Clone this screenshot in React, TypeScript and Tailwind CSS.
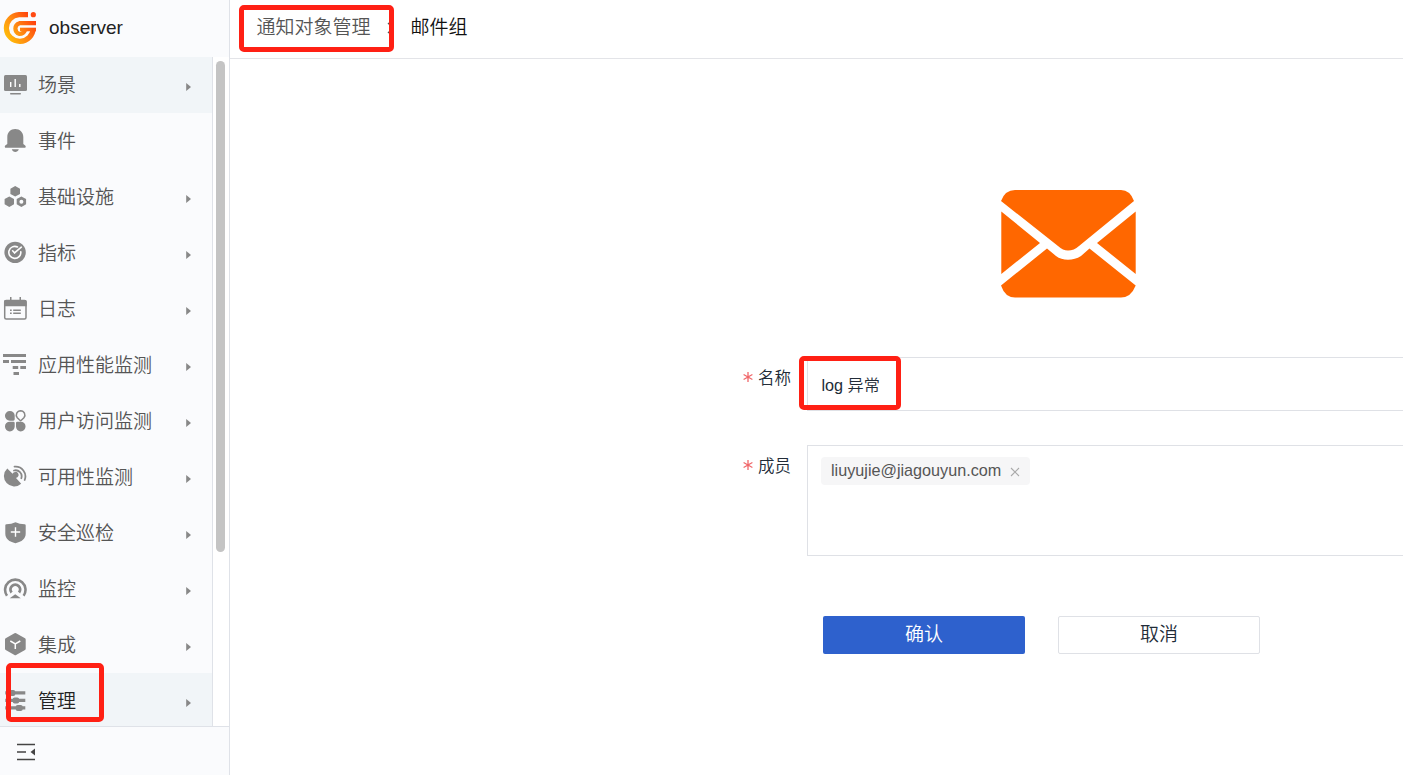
import type { ReactNode } from 'react';

const HAN = "font-['Liberation_Sans','Noto_Sans_CJK_SC',sans-serif]";

type Item = { label: string; arrow: boolean; active?: boolean; icon: ReactNode };

const items: Item[] = [
  {
    label: '场景',
    arrow: true,
    active: true,
    icon: (
      <>
        <rect x="1" y="2" width="23" height="16" rx="1.5" />
        <rect x="7" y="20" width="11" height="1.4" rx=".7" />
        <path d="M7.7 9v5M12.2 6v8M16.8 11v3" stroke="#fff" strokeWidth="1.4" />
      </>
    ),
  },
  {
    label: '事件',
    arrow: false,
    icon: (
      <path d="M12.2 0C7.6 0 4.3 3.4 4.3 8v7L2.2 16.4C1.4 17.2 1.8 18.8 3 18.8H21.4C22.8 18.8 23.2 17.2 22.2 16.4L20.3 15V8C20.3 3.4 16.8 0 12.2 0ZM8.8 20.2H15.8C15.2 22 13.8 23 12.3 23C10.7 23 9.4 22 8.8 20.2Z" />
    ),
  },
  {
    label: '基础设施',
    arrow: true,
    icon: (
      <>
        <path d="M12.2 1l4.8 2.7v5.2l-4.8 2.7-4.8-2.7V3.7zM6.3 11.5l4.7 2.6v5.2l-4.7 2.6-4.7-2.6v-5.2z" />
        <path fillRule="evenodd" d="M18.4 11.5l4.7 2.6v5.2l-4.7 2.6-4.7-2.6v-5.2zM18.4 14.7a2 2 0 1 0 0 4 2 2 0 0 0 0-4z" />
      </>
    ),
  },
  {
    label: '指标',
    arrow: true,
    icon: (
      <>
        <circle cx="12.1" cy="11.4" r="10.7" />
        <path d="M14.5 6A6 6 0 1 0 17.8 10.800M11.5 11.8L18.3 6.2" fill="none" stroke="#fff" strokeWidth="1.6" strokeLinecap="round" />
        <path d="M9.600 9.800L11.500 11.800" fill="none" stroke="#fff" strokeWidth="1.600" strokeLinecap="round" />
      </>
    ),
  },
  {
    label: '日志',
    arrow: true,
    icon: (
      <>
        <rect x="1.7" y="3.6" width="21.3" height="18.4" rx="1.5" fill="none" stroke="#888" strokeWidth="1.5" />
        <path d="M1 4.5A1.5 1.5 0 0 1 2.5 3H22.2A1.5 1.5 0 0 1 23.7 4.5V9.3H1zM7 0h1.500v3H7zM16.500 0h1.500v3h-1.500zM7 12.500h1.700v1.400H7zM7 15.500h1.700v1.400H7zM10.200 12.500h7.600v1.400h-7.600zM10.200 15.500h7.600v1.400h-7.600z" />
      </>
    ),
  },
  {
    label: '应用性能监测',
    arrow: true,
    icon: <path d="M0 1h23v3H0zM0 7h6v3H0zM8 7h15v3H8zM9.700 13h5.500v3H9.700zM17.300 13H23v3h-5.700zM10.500 19H16v3h-5.500z" />,
  },
  {
    label: '用户访问监测',
    arrow: true,
    icon: (
      <>
        <path d="M6.800 2A4.800 4.800 0 0 0 6.800 11.700H10.300A1.400 1.400 0 0 0 11.700 10.300V6.800A4.800 4.800 0 0 0 6.800 2ZM6.800 22.400A4.800 4.800 0 0 1 6.800 12.700H10.300A1.400 1.400 0 0 1 11.700 14.100V17.600A4.800 4.800 0 0 1 6.800 22.400ZM17.700 22.400A4.800 4.800 0 0 0 17.700 12.700H14.400A1.400 1.400 0 0 0 13 14.100V17.600A4.800 4.800 0 0 0 17.700 22.400Z" />
        <path d="M17.600 1.700A4.300 4.300 0 0 1 20.900 8.700L18.300 11.300Q17.600 12 16.900 11.300L14.300 8.700A4.300 4.300 0 0 1 17.600 1.700Z" fill="none" stroke="#888" strokeWidth="1.500" />
      </>
    ),
  },
  {
    label: '可用性监测',
    arrow: true,
    icon: (
      <>
        <path d="M4.300 3.500L9.600 8.800A3.100 3.100 0 1 1 13 13L18.200 18.800A10 10 0 0 1 4.300 3.500Z" />
        <path d="M11.500 1.700A9.800 9.800 0 0 1 21.700 15M11 5.500A6 6 0 0 1 18.300 13.200" fill="none" stroke="#888" strokeWidth="1.800" strokeLinecap="round" />
      </>
    ),
  },
  {
    label: '安全巡检',
    arrow: true,
    icon: (
      <>
        <path d="M12.500 1.200Q16.500 3.200 21.600 3.300Q22.700 3.400 22.700 4.500V12.500C22.700 18 18.800 20.600 12.500 22.200C6.200 20.600 2.300 18 2.300 12.500V4.500Q2.300 3.400 3.400 3.300Q8.500 3.200 12.500 1.200Z" />
        <path d="M12.500 6.300v9.400M7.800 11h9.400" stroke="#fff" strokeWidth="1.400" />
      </>
    ),
  },
  {
    label: '监控',
    arrow: true,
    icon: (
      <>
        <path d="M4 18.800A10.200 10.200 0 1 1 20.600 18.800" fill="none" stroke="#888" strokeWidth="2.600" />
        <path d="M8.600 15.500A4.800 4.800 0 1 1 16 15.500" fill="none" stroke="#888" strokeWidth="2.900" />
        <path d="M6.700 21.200L12.250 17.300L17.800 21.200Z" />
      </>
    ),
  },
  {
    label: '集成',
    arrow: true,
    icon: (
      <>
        <path d="M11.500 .3Q12.300-.2 13.100.3L22 5.300Q22.700 5.800 22.700 6.500V15.700Q22.700 16.500 22 16.900L13.100 22Q12.300 22.400 11.500 22L2.700 16.900Q2 16.500 2 15.700V6.500Q2 5.800 2.700 5.300Z" />
        <path d="M7.300 8l5 3 5-3M12.300 11v5" fill="none" stroke="#fff" strokeWidth="1.500" />
      </>
    ),
  },
  {
    label: '管理',
    arrow: true,
    active: true,
    icon: (
      <>
        <path d="M2.300 2.300h20v3.300h-20zM2.300 9.700h20V13h-20zM2.300 17.300h20v3.300h-20z" />
        <rect x="6.500" y="1" width="5.800" height="6" rx="2" />
        <rect x="9.700" y="8.400" width="6.500" height="6" rx="2" />
        <rect x="12.700" y="16" width="7" height="6" rx="2" />
      </>
    ),
  },
];

function NavRow({ item, last }: { item: Item; last: boolean }) {
  return (
    <a className={`flex h-14 shrink-0 items-center pl-[3px] pr-[21px] ${item.active ? 'bg-[#f1f5f8]' : ''}`}>
      <svg className="mr-[11px] size-6 shrink-0" viewBox="0 0 24 24" fill="#888">
        {item.icon}
      </svg>
      <span className={`flex-1 pt-0.5 text-[19px] leading-7 font-[350] ${last ? 'text-[#222]' : 'text-[#555]'}`}>{item.label}</span>
      {item.arrow && (
        <svg className="mt-[3px] h-2 w-[5px]" viewBox="0 0 5 8" fill="#888">
          <path d="M.2 0L5 4 .2 8z" />
        </svg>
      )}
    </a>
  );
}

function Logo() {
  return (
    <svg className="h-8 w-[34px]" viewBox="0 0 34 32" fill="none">
      <defs>
        <linearGradient id="flame" gradientUnits="userSpaceOnUse" x1="2" y1="25" x2="29" y2="6">
          <stop offset="0" stopColor="#ffc00a" />
          <stop offset=".5" stopColor="#ff8712" />
          <stop offset="1" stopColor="#ff420e" />
        </linearGradient>
      </defs>
      <g stroke="url(#flame)">
        <path d="M25 2.600H16A13.400 13.400 0 1 0 30.200 16" strokeWidth="5.200" />
        <path d="M33 11.200H16.500A5.600 5.600 0 0 0 16.500 22Q20.500 22 22.300 17.600" strokeWidth="4.200" />
        <path d="M17 17.500H33" strokeWidth="3.600" />
      </g>
      <circle cx="30.300" cy="2.700" r="2.600" fill="#ff4a12" />
    </svg>
  );
}

function Sidebar() {
  return (
    <aside className="flex w-[230px] shrink-0 flex-col border-r border-[#dfe2e8] bg-[#fafbfd]">
      <div className="flex h-[57px] shrink-0 items-center gap-3 pl-[3px] pb-px text-[19px] text-[#222]">
        <Logo />
        <span>observer</span>
      </div>
      <div className="flex min-h-0 flex-1">
        <nav className="flex w-[213px] flex-col overflow-hidden border-r border-[#dfe2e8]">
          {items.map((item, i) => (
            <NavRow key={item.label} item={item} last={i === items.length - 1} />
          ))}
        </nav>
        <div className="flex-1 bg-white pt-1 pl-[3px]">
          <div className="h-[491px] w-[9px] rounded-full bg-[#c4c4c4]" />
        </div>
      </div>
      <div className="flex h-[49px] shrink-0 items-center border-t border-[#dfe2e8] pl-4 pt-0.5">
        <svg className="h-[18px] w-[20px]" viewBox="0 0 20 18">
          <path d="M1 1.500h18M1 9h9M1 16.500h18" stroke="#444" strokeWidth="1.500" />
          <path d="M19 5.500v7L14.500 9z" fill="#444" />
        </svg>
      </div>
    </aside>
  );
}

function Label({ children }: { children: ReactNode }) {
  return (
    <div className="flex w-[577px] shrink-0 justify-end pr-4 pt-[9px] text-[16.500px] leading-6 font-[350] text-[#222c38]">
      <svg className="mt-[6px] mr-[5px] size-[10px]" viewBox="0 0 10 10" stroke="#f0676a" strokeWidth="1.300">
        <path d="M5 0v10M.6 2.500l8.800 5M9.400 2.500l-8.800 5" />
      </svg>
      {children}
    </div>
  );
}

export default function App() {
  return (
    <div className={`relative flex h-[775px] w-full overflow-hidden bg-white ${HAN}`}>
      <Sidebar />
      <main className="flex min-w-0 flex-1 flex-col">
        <header className="flex h-[59px] shrink-0 items-center border-b border-[#e3e4e8] pl-[26.500px] pb-0.5 text-[19px] font-[350]">
          <span className="text-[#555]">通知对象管理</span>
          <span className="w-[40px] pl-4">
            <svg className="h-3 w-[7px]" viewBox="0 0 7 12" fill="none" stroke="#555" strokeWidth="1.300">
              <path d="M1 1l5 5-5 5" />
            </svg>
          </span>
          <span className="text-[#111]">邮件组</span>
        </header>
        <svg className="mt-[131px] ml-[771px] h-[108px] w-[135px] shrink-0" viewBox="0 0 135 108" fill="#ff6700">
          <path d="M0 11Q4 0 14 0H120Q129 0 133 11L78 56Q73 60.500 67 60.500Q62 60.500 57 56Z" />
          <path d="M.3 21.500L39 53 .3 84zM134.700 21.500L96 53l38.700 31z" />
          <path d="M0 95.500L46 58.500 55 66Q60 69.800 67 69.800T80 66L88.500 58.500 134.700 95.500Q130 107.500 120 107.500H14Q4 107.500 0 95.500Z" />
        </svg>
        <div className="mt-[59px] flex">
          <Label>名称</Label>
          <div className="flex h-[54px] min-w-0 flex-1 items-center border border-r-0 border-[#dfe1e6] pt-[3px] pl-[13.500px] text-[16.200px] font-[350] text-[#222c38]">
            log 异常
          </div>
        </div>
        <div className="mt-[34px] flex">
          <Label>成员</Label>
          <div className="h-[111px] min-w-0 flex-1 border border-r-0 border-[#dfe1e6] pt-[11px] pl-[13px]">
            <div className="flex h-7 w-[209px] items-center justify-between rounded bg-[#f6f6f7] pr-[10px] pb-px pl-[10px] text-[16.200px] text-[#555]">
              <span>liuyujie@jiagouyun.com</span>
              <svg className="mt-[3px] size-[10px] shrink-0" viewBox="0 0 10 10" stroke="#aaa" strokeWidth="1.100">
                <path d="M1 1l8 8M9 1L1 9" />
              </svg>
            </div>
          </div>
        </div>
        <div className="mt-[60px] ml-[593px] flex gap-[33px] text-[19px] font-[350]">
          <button className="h-[38px] w-[202px] rounded-xs bg-[#2e61cd] pt-px text-white">确认</button>
          <button className="h-[38px] w-[202px] rounded-xs border border-[#dfe1e6] bg-white pt-px text-[#222c38]">取消</button>
        </div>
      </main>
      <div className="absolute top-[5px] left-[239px] h-[47px] w-[155px] rounded-[5px] border-5 border-[#ff2014]" />
      <div className="absolute top-[356px] left-[799px] h-[54px] w-[102px] rounded-[5px] border-5 border-[#ff2014]" />
      <div className="absolute top-[663px] left-[6px] h-[59px] w-[98px] rounded-[5px] border-5 border-[#ff2014]" />
    </div>
  );
}
